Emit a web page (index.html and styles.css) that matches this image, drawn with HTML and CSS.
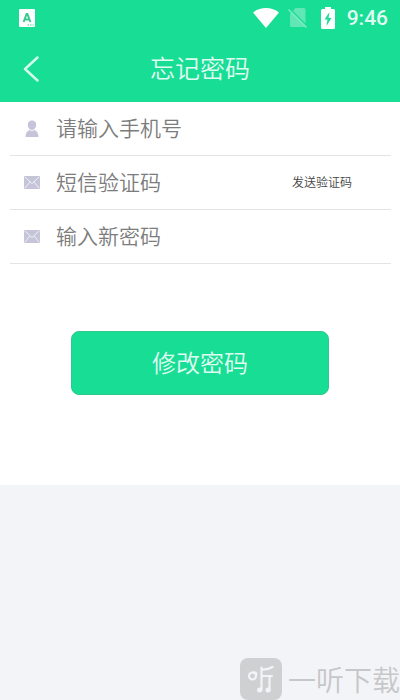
FILE: index.html
```html
<!DOCTYPE html>
<html lang="zh-CN">
<head>
<meta charset="utf-8">
<meta name="viewport" content="width=device-width, initial-scale=1">
<title>忘记密码</title>
<link rel="stylesheet" href="styles.css">
</head>
<body>
<header class="top">
  <div class="status">
    <svg class="status-app" width="16" height="18" viewBox="0 0 16 18" aria-hidden="true">
      <rect width="16" height="18" rx="1" fill="#fff"/>
      <path d="M4.600 13 7.600 5h.8l3 8M5.800 10.500h4.400" fill="none" stroke="#3cc98f" stroke-width="2"/>
      <path d="M8.500 16h1.500M11 16h1.500M13.500 16h1" stroke="#3cc98f" stroke-width="1.200"/>
    </svg>
    <div class="status-right">
      <svg width="26" height="20" viewBox="0 0 26 20" aria-hidden="true">
        <path d="M0 4.500Q5.500 0 13 0t13 4.500L13 20z" fill="#fff"/>
      </svg>
      <svg class="status-sim" width="20" height="20" viewBox="0 0 20 20" aria-hidden="true">
        <path d="M2 6 7.500 0H16q1.500 0 1.500 1.500V19H3.500Q2 19 2 17.500z" fill="#61e7b5"/>
        <path d="M1.500 .5 19.500 18.500" stroke="#17dd95" stroke-width="1.500"/>
        <path d="M.5 1.500 18.500 19.500" stroke="#7aebc2" stroke-width="1.500"/>
      </svg>
      <svg class="status-battery" width="14" height="22" viewBox="0 0 14 22" aria-hidden="true">
        <path d="M4 0h6v2h2.500Q14 2 14 3.500v17q0 1.500-1.500 1.500h-11Q0 22 0 20.500v-17Q0 2 1.500 2H4z" fill="#fff"/>
        <path d="M8.500 5 3.500 12.500h3L5.500 19l5-8h-3z" fill="#17dd95"/>
      </svg>
      <span class="clock">9:46</span>
    </div>
  </div>
  <div class="nav">
    <button class="back" type="button" aria-label="返回">
      <svg width="16" height="26" viewBox="0 0 16 26" aria-hidden="true">
        <path d="M14.500 1.500 2 13l12.500 11.500" fill="none" stroke="#d5fbed" stroke-width="2.400" stroke-linecap="round" stroke-linejoin="round"/>
      </svg>
    </button>
    <h1 class="title">忘记密码</h1>
  </div>
</header>
<main class="page">
  <form class="form">
    <div class="row">
      <label class="icon" for="phone" aria-label="手机号">
        <svg width="16" height="18" viewBox="0 0 16 18" aria-hidden="true">
          <path d="M8 .5c2.700 0 4.200 1.700 4.200 4.200S10.500 10 8 10 3.800 7.200 3.800 4.700 5.300.5 8 .5zM5.500 10q2.500 1.800 5 0 3.800 1.500 4 7h-13q.2-5.500 4-7z" fill="#c5c4d8"/>
        </svg>
      </label>
      <input class="field" id="phone" type="tel" placeholder="请输入手机号">
    </div>
    <div class="row">
      <label class="icon" for="code" aria-label="短信验证码">
        <svg width="16" height="13" viewBox="0 0 16 13" aria-hidden="true">
          <rect width="16" height="13" rx="1" fill="#c5c4d8"/>
          <path d="M1 1 8 7.500 15 1M1 12l5-6M15 12l-5-6" fill="none" stroke="#f1f1f7"/>
        </svg>
      </label>
      <input class="field" id="code" type="text" placeholder="短信验证码">
      <button class="send" type="button">发送验证码</button>
    </div>
    <div class="row">
      <label class="icon" for="password" aria-label="新密码">
        <svg width="16" height="13" viewBox="0 0 16 13" aria-hidden="true">
          <rect width="16" height="13" rx="1" fill="#c5c4d8"/>
          <path d="M1 1 8 7.500 15 1M1 12l5-6M15 12l-5-6" fill="none" stroke="#f1f1f7"/>
        </svg>
      </label>
      <input class="field" id="password" type="password" placeholder="输入新密码">
    </div>
    <button class="submit" type="submit">修改密码</button>
  </form>
</main>
<footer class="brand">
  <svg width="42" height="42" viewBox="0 0 42 42" aria-hidden="true">
    <rect width="42" height="42" rx="8" fill="#cfd0d2"/>
    <g fill="none" stroke="#f3f4f7" stroke-width="2.200" stroke-linecap="round" stroke-linejoin="round">
      <circle cx="12.500" cy="18" r="3.500"/>
      <path d="M13 14.500q3-.5 3.500 1.500"/>
      <path d="M21.500 32V9.500M21.500 11.500q6 .5 11-2.500M21.500 18h10.500M29.500 18v14"/>
    </g>
    <circle cx="19.500" cy="32" r="2.500" fill="#f3f4f7"/>
    <circle cx="28" cy="32" r="2.500" fill="#f3f4f7"/>
  </svg>
  <span class="brand-name">一听下载</span>
</footer>
</body>
</html>
```
FILE: styles.css
```css
* {
  box-sizing: border-box;
}

body {
  display: flex;
  flex-direction: column;
  min-height: 100vh;
  margin: 0;
  background: #f3f4f7;
  font-family: "Noto Sans CJK SC", sans-serif;
  font-weight: 350;
}

button,
input {
  padding: 0;
  border: 0;
  background: none;
  font-family: inherit;
  font-weight: inherit;
}

.top {
  background: #17dd95;
  color: #e0fcf2;
}

.status {
  display: flex;
  align-items: center;
  justify-content: space-between;
  height: 36px;
  padding: 0 12px 0 19px;
}

.status-right {
  display: flex;
  align-items: center;
}

.status-sim {
  margin-left: 9px;
}

.status-battery {
  margin: 0 12px 0 13px;
}

.clock {
  font-family: Roboto, sans-serif;
  font-size: 21px;
  font-weight: 500;
  line-height: 36px;
}

.nav {
  display: grid;
  grid-template-columns: 64px 1fr 64px;
  align-items: center;
  height: 66px;
}

.back {
  display: flex;
  align-items: center;
  height: 66px;
  padding-left: 23px;
}

.title {
  grid-column: 2;
  margin: 0;
  padding-bottom: 4px;
  font-size: 25px;
  font-weight: inherit;
  line-height: 36px;
  text-align: center;
}

.page {
  padding-bottom: 90px;
  background: #fff;
}

.row {
  display: flex;
  align-items: center;
  height: 54px;
  margin: 0 9px 0 10px;
  padding-right: 39px;
  border-bottom: 1px solid #e4e4e4;
}

.icon {
  display: flex;
  justify-content: center;
  width: 43px;
}

.field {
  flex: 1;
  min-width: 0;
  height: 40px;
  padding: 0 0 4px 3px;
  color: #555;
  font-size: 21px;
  outline: 0;
}

.field::placeholder {
  color: #7c7c7c;
}

.send {
  padding-bottom: 2px;
  color: #444;
  font-size: 12px;
  line-height: 20px;
}

.submit {
  display: block;
  width: calc(100% - 142px);
  height: 64px;
  margin: 67px auto 0;
  padding-bottom: 4px;
  border: 1px solid #2cc98d;
  border-radius: 8px;
  background: #17dd95;
  color: #e0fcf2;
  font-size: 24px;
}

.brand {
  display: flex;
  flex: 1;
  align-items: flex-end;
  justify-content: flex-end;
  gap: 6px;
}

.brand-name {
  color: #c6c7c9;
  font-size: 28px;
  line-height: 42px;
}
```
